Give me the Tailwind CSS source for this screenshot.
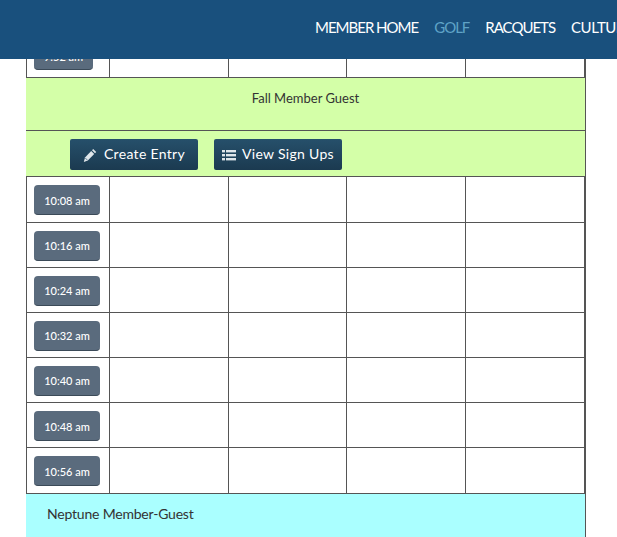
<!DOCTYPE html>
<html><head><meta charset="utf-8"><script src="https://cdn.jsdelivr.net/npm/@tailwindcss/browser@4"></script></head>
<body class="bg-white overflow-hidden font-['Lato',sans-serif] text-[#333]">
<div class="w-[617px] h-[537px] overflow-hidden">
<header class="relative z-10 h-[59px] bg-[#19507d] flex items-start pl-[315px] pt-[17px] gap-[16px] text-[15px] tracking-[-1px] leading-[20px] text-white whitespace-nowrap overflow-hidden">
<span>MEMBER HOME</span><span class="text-[#5fa3c7]">GOLF</span><span>RACQUETS</span><span class="tracking-[-0.5px]">CULTURE</span>
</header>
<main class="ml-[26px] w-[560px] border-l border-r border-[#555]">
<div class="grid grid-cols-[83px_119px_118px_119px_119px] h-[19px] border-b border-[#555]">
<div class="border-r border-[#555] pl-[7px]"><div class="-mt-[19px] w-[59px] h-[30px] rounded bg-[#5a6b7d] border-b border-[#3b4a58] text-white text-[11px] font-medium text-center leading-[33px]">9:52 am</div></div>
<div class="border-r border-[#555]"></div><div class="border-r border-[#555]"></div><div class="border-r border-[#555]"></div><div class="border-r border-[#555]"></div>
</div>
<div class="-ml-px h-[53px] bg-[#d4ffa8] border-b border-[#555] text-center text-[13px] leading-[20px] pt-[10px]">Fall Member Guest</div>
<div class="-ml-px h-[46px] bg-[#d4ffa8] border-b border-[#555] flex items-start pt-[8px] pl-[44px] gap-[16px]">
<button class="w-[128px] h-[31px] pb-[2px] flex items-center justify-center gap-[7px] rounded-[2px] bg-linear-to-b from-[#26506b] to-[#1b3a50] text-white text-[14px] tracking-[0.32px]">
<svg class="mt-[3px]" width="14" height="15" viewBox="0 0 14 15" fill="#dfe6ea"><path d="M10.2 1 13.2 4 12 5.2 9 2.2z"/><path d="M8.2 3 11.2 6 4.8 12.4 0.8 14 2 9.4z"/><path d="M2.3 10 4.3 12" stroke="#26506b" stroke-width="0.7" fill="none"/></svg><span>Create Entry</span></button>
<button class="w-[128px] h-[31px] pb-[2px] flex items-center justify-center gap-[6px] rounded-[2px] bg-linear-to-b from-[#26506b] to-[#1b3a50] text-white text-[14px] tracking-[0.3px]">
<svg class="mt-[2px]" width="14" height="12" viewBox="0 0 14 12" fill="#dfe6ea"><rect x="0" y="1" width="3" height="2.4"/><rect x="4" y="1" width="10" height="2.4"/><rect x="0" y="5" width="3" height="2.4"/><rect x="4" y="5" width="10" height="2.4"/><rect x="0" y="9" width="3" height="2.4"/><rect x="4" y="9" width="10" height="2.4"/></svg><span>View Sign Ups</span></button>
</div>
<div class="grid grid-cols-[83px_119px_118px_119px_119px] h-[46px] border-b border-[#555]">
<div class="border-r border-[#555] pl-[7px] pt-[8px]"><div class="w-[66px] h-[30px] rounded bg-[#5a6b7d] border-b border-[#3b4a58] text-white text-[11px] font-medium text-center leading-[31px]">10:08 am</div></div>
<div class="border-r border-[#555]"></div><div class="border-r border-[#555]"></div><div class="border-r border-[#555]"></div><div class="border-r border-[#555]"></div></div>
<div class="grid grid-cols-[83px_119px_118px_119px_119px] h-[45px] border-b border-[#555]">
<div class="border-r border-[#555] pl-[7px] pt-[8px]"><div class="w-[66px] h-[30px] rounded bg-[#5a6b7d] border-b border-[#3b4a58] text-white text-[11px] font-medium text-center leading-[30px]">10:16 am</div></div>
<div class="border-r border-[#555]"></div><div class="border-r border-[#555]"></div><div class="border-r border-[#555]"></div><div class="border-r border-[#555]"></div></div>
<div class="grid grid-cols-[83px_119px_118px_119px_119px] h-[45px] border-b border-[#555]">
<div class="border-r border-[#555] pl-[7px] pt-[8px]"><div class="w-[66px] h-[30px] rounded bg-[#5a6b7d] border-b border-[#3b4a58] text-white text-[11px] font-medium text-center leading-[30px]">10:24 am</div></div>
<div class="border-r border-[#555]"></div><div class="border-r border-[#555]"></div><div class="border-r border-[#555]"></div><div class="border-r border-[#555]"></div></div>
<div class="grid grid-cols-[83px_119px_118px_119px_119px] h-[45px] border-b border-[#555]">
<div class="border-r border-[#555] pl-[7px] pt-[8px]"><div class="w-[66px] h-[30px] rounded bg-[#5a6b7d] border-b border-[#3b4a58] text-white text-[11px] font-medium text-center leading-[30px]">10:32 am</div></div>
<div class="border-r border-[#555]"></div><div class="border-r border-[#555]"></div><div class="border-r border-[#555]"></div><div class="border-r border-[#555]"></div></div>
<div class="grid grid-cols-[83px_119px_118px_119px_119px] h-[45px] border-b border-[#555]">
<div class="border-r border-[#555] pl-[7px] pt-[8px]"><div class="w-[66px] h-[30px] rounded bg-[#5a6b7d] border-b border-[#3b4a58] text-white text-[11px] font-medium text-center leading-[30px]">10:40 am</div></div>
<div class="border-r border-[#555]"></div><div class="border-r border-[#555]"></div><div class="border-r border-[#555]"></div><div class="border-r border-[#555]"></div></div>
<div class="grid grid-cols-[83px_119px_118px_119px_119px] h-[45px] border-b border-[#555]">
<div class="border-r border-[#555] pl-[7px] pt-[8px]"><div class="w-[66px] h-[30px] rounded bg-[#5a6b7d] border-b border-[#3b4a58] text-white text-[11px] font-medium text-center leading-[31px]">10:48 am</div></div>
<div class="border-r border-[#555]"></div><div class="border-r border-[#555]"></div><div class="border-r border-[#555]"></div><div class="border-r border-[#555]"></div></div>
<div class="grid grid-cols-[83px_119px_118px_119px_119px] h-[46px] border-b border-[#555]">
<div class="border-r border-[#555] pl-[7px] pt-[8px]"><div class="w-[66px] h-[30px] rounded bg-[#5a6b7d] border-b border-[#3b4a58] text-white text-[11px] font-medium text-center leading-[31px]">10:56 am</div></div>
<div class="border-r border-[#555]"></div><div class="border-r border-[#555]"></div><div class="border-r border-[#555]"></div><div class="border-r border-[#555]"></div></div>
<div class="-ml-px h-[60px] bg-[#aaffff] pl-[21px] pt-[10px] text-[14px] tracking-[-0.2px] leading-[20px]">Neptune Member-Guest</div>
</main>
</div>
</body></html>
